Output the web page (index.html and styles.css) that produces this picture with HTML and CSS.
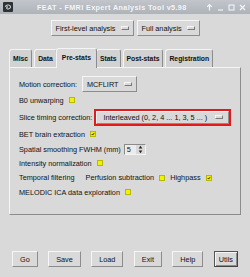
FILE: index.html
```html
<!DOCTYPE html>
<html lang="en">
<head>
  <meta charset="UTF-8">
  <title>FEAT - FMRI Expert Analysis Tool v5.98</title>
  <link rel="stylesheet" href="styles.css">
</head>
<body>

<!-- Barra de titulo -->
<div class="titlebar">
  <svg class="app-icon" viewBox="0 0 10 10">
    <rect width="10" height="10" rx="1" fill="#2e3236"/>
    <path d="M2.5 5 C2.5 2.8 6.5 2.2 7.4 4.2 C8 5.8 6 7.6 4.2 6.8 C3.2 6.3 3.6 4.8 5 4.9" fill="none" stroke="#c9ced2" stroke-width="1.1"/>
  </svg>
  <span class="title">FEAT - FMRI Expert Analysis Tool v5.98</span>
  <div class="controls">
    <svg viewBox="0 0 7 7"><path d="M3.5 0.5 L3.5 6.5 M1.2 2.8 L3.5 0.5 L5.8 2.8" fill="none" stroke="#f2f4f6" stroke-width="1.2"/></svg>
    <svg viewBox="0 0 7 7"><path d="M1 6 L6 6" stroke="#f2f4f6" stroke-width="1.2"/></svg>
    <svg viewBox="0 0 7 7"><rect x="1" y="1" width="5" height="5" fill="none" stroke="#f2f4f6" stroke-width="1.1"/></svg>
    <svg viewBox="0 0 7 7"><path d="M1 1 L6 6 M6 1 L1 6" stroke="#f2f4f6" stroke-width="1.3"/></svg>
  </div>
</div>

<!-- Tipo de analisis -->
<div class="mode-row">
  <div class="menubutton first">First-level analysis <span class="ind"></span></div>
  <div class="menubutton full">Full analysis <span class="ind"></span></div>
</div>

<!-- Pestañas -->
<div class="tabs">
  <div class="tab">Misc</div>
  <div class="tab">Data</div>
  <div class="tab selected">Pre-stats</div>
  <div class="tab">Stats</div>
  <div class="tab">Post-stats</div>
  <div class="tab">Registration</div>
</div>

<div class="panel">
  <div class="row r-motion">
    <span>Motion correction:</span>
    <div class="menubutton mcflirt">MCFLIRT <span class="ind"></span></div>
  </div>
  <div class="row r-b0">
    <span>B0 unwarping</span><span class="check"></span>
  </div>
  <div class="row r-slice">
    <span>Slice timing correction:</span>
    <div class="highlight">
      <div class="menubutton slice">Interleaved (0, 2, 4 ... 1, 3, 5 ... ) <span class="ind"></span></div>
    </div>
  </div>
  <div class="row r-bet">
    <span>BET brain extraction</span>
    <span class="check">
      <svg viewBox="0 0 6 6"><path d="M1 3 L2.5 4.6 L5 1.4" fill="none" stroke="#000" stroke-width="1.2"/></svg>
    </span>
  </div>
  <div class="row r-smooth">
    <span>Spatial smoothing FWHM (mm)</span>
    <div class="spinbox">
      <span class="value">5</span>
      <span class="arrows">
        <svg viewBox="0 0 5 10"><path d="M2.5 0.8 L4.5 3.8 L0.5 3.8 Z M2.5 9.2 L4.5 6.2 L0.5 6.2 Z" fill="#222"/></svg>
      </span>
    </div>
  </div>
  <div class="row r-norm">
    <span>Intensity normalization</span><span class="check"></span>
  </div>
  <div class="row r-temp">
    <span>Temporal filtering</span>
    <span class="gap-label">Perfusion subtraction</span><span class="check"></span>
    <span class="gap-label hp">Highpass</span>
    <span class="check">
      <svg viewBox="0 0 6 6"><path d="M1 3 L2.5 4.6 L5 1.4" fill="none" stroke="#000" stroke-width="1.2"/></svg>
    </span>
  </div>
  <div class="row r-melodic">
    <span>MELODIC ICA data exploration</span><span class="check"></span>
  </div>
</div>

<!-- Botones -->
<div class="actions">
  <button class="btn">Go</button>
  <button class="btn">Save</button>
  <button class="btn">Load</button>
  <button class="btn">Exit</button>
  <button class="btn">Help</button>
  <button class="btn active">Utils</button>
</div>

</body>
</html>
```

FILE: styles.css
```css
* {
  box-sizing: border-box;
}

body {
  margin: 0;
  width: 250px;
  height: 277px;
  overflow: hidden;
  background: #d9d9d9;
  font-family: 'Liberation Sans', Arial, sans-serif;
  font-size: 7.3px;
  color: #111;
}

/* barra de titulo */
.titlebar {
  height: 14px;
  background: linear-gradient(#c2c6cb, #aeb3ba);
  display: flex;
  align-items: center;
  padding: 0 4px 0 3px;
}

.app-icon {
  width: 10px;
  height: 10px;
}

.title {
  margin-left: 24px;
  color: #f3f5f7;
  font-weight: bold;
  font-size: 7.2px;
  letter-spacing: 0.4px;
  white-space: nowrap;
}

.controls {
  margin-left: auto;
  display: flex;
  gap: 4px;
}

.controls svg {
  width: 7px;
  height: 7px;
}

/* menubuttons */
.mode-row {
  display: flex;
  justify-content: center;
  gap: 3px;
  margin-top: 6px;
}

.menubutton {
  height: 16px;
  display: flex;
  align-items: center;
  padding: 0 4px;
  border: 1px solid;
  border-color: #f6f6f6 #8c8c8c #8c8c8c #f6f6f6;
  white-space: nowrap;
}

.menubutton .ind {
  margin-left: auto;
  width: 8px;
  height: 4px;
  border: 1px solid;
  border-color: #f6f6f6 #7a7a7a #7a7a7a #f6f6f6;
}

.first { width: 83px; }
.full { width: 63px; }
.mcflirt { width: 55px; }

/* pestañas */
.tabs {
  display: flex;
  align-items: flex-end;
  height: 20px;
  margin-top: 11px;
  padding-left: 9px;
}

.tab {
  height: 18px;
  display: flex;
  align-items: center;
  padding: 0 3px;
  margin-right: 2px;
  font-size: 6.8px;
  font-weight: bold;
  background: #d2d2d2;
  border: 1px solid;
  border-bottom: none;
  border-color: #f4f4f4 #8c8c8c #8c8c8c #f4f4f4;
  border-radius: 3px 3px 0 0;
  white-space: nowrap;
}

.tab.selected {
  height: 20px;
  padding: 0 5px 3px;
  margin: 0 0 -1px -3px;
  background: #d9d9d9;
  position: relative;
  z-index: 1;
}

.tab.selected + .tab {
  margin-left: -1px;
}

/* panel */
.panel {
  margin: 0 9px;
  height: 148px;
  border: 1px solid;
  border-color: #f4f4f4 #8c8c8c #8c8c8c #f4f4f4;
  padding: 8px 0 0 9px;
}

.row {
  height: 16px;
  display: flex;
  align-items: center;
  gap: 5px;
  white-space: nowrap;
}

.r-slice { height: 18px; gap: 2px; }
.r-smooth { height: 14px; gap: 3px; }
.r-norm { height: 14px; }
.r-temp { height: 15px; }
.r-melodic { height: 14px; }

.check {
  width: 6px;
  height: 6px;
  background: #f2f200;
  border: 1px solid #b8b800;
  display: flex;
}

.check svg {
  width: 100%;
  height: 100%;
}

.gap-label {
  margin-left: 6px;
}

.gap-label.hp {
  margin-left: 0;
}

.highlight {
  width: 137px;
  height: 17px;
  border: 2px solid #e21a1a;
  display: flex;
}

.slice {
  width: 100%;
  height: 13px;
  padding: 0 5px 0 6px;
}

.spinbox {
  display: flex;
  height: 11px;
  border: 1px solid;
  border-color: #8c8c8c #f4f4f4 #f4f4f4 #8c8c8c;
}

.spinbox .value {
  width: 11px;
  background: #ececec;
  padding-left: 2px;
  display: flex;
  align-items: center;
}

.spinbox .arrows {
  width: 9px;
  display: flex;
  align-items: center;
  justify-content: center;
}

.spinbox svg {
  width: 5px;
  height: 9px;
}

/* botones inferiores */
.actions {
  display: flex;
  justify-content: space-between;
  padding: 0 12px;
  margin-top: 36px;
}

.btn {
  height: 16px;
  padding: 0 7px;
  font-family: inherit;
  font-size: 7.3px;
  color: #111;
  background: #d9d9d9;
  border: 1px solid;
  border-color: #f6f6f6 #8c8c8c #8c8c8c #f6f6f6;
}

.btn.active {
  padding: 0 4px;
  border-color: #555 #444 #444 #555;
  box-shadow: inset 1px 1px 0 #f6f6f6, inset -1px -1px 0 #8c8c8c;
}
```
